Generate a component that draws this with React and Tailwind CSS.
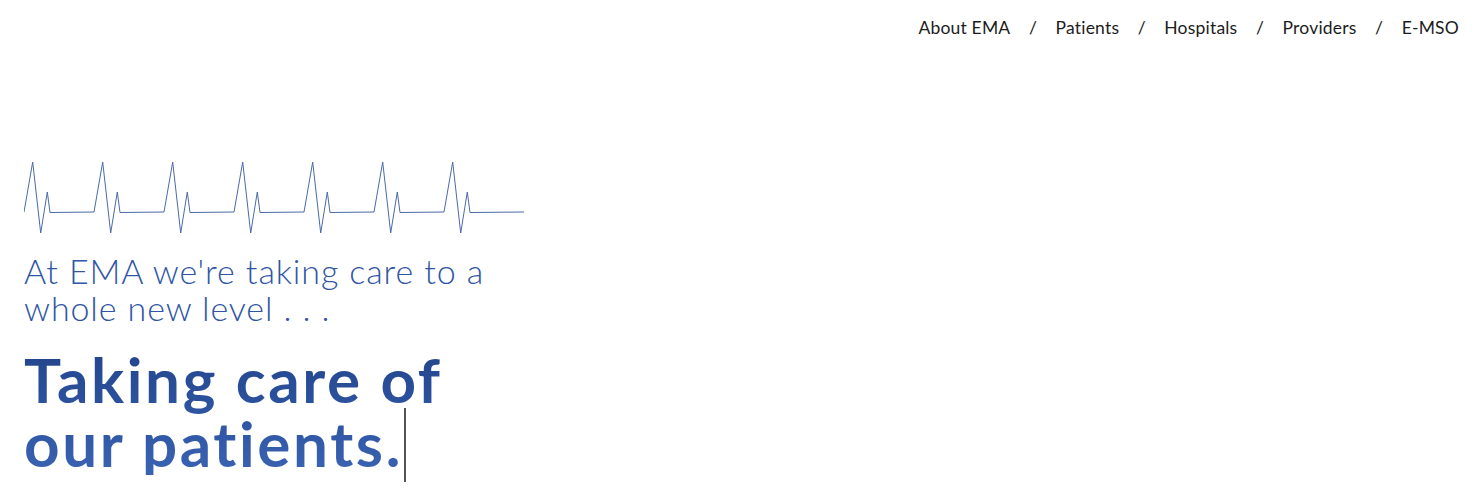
import React from "react";

const NAV = ["About EMA", "Patients", "Hospitals", "Providers", "E-MSO"];

// one heartbeat every 70px
function ecgPoints() {
  const pts = [];
  for (let k = 0; k < 7; k++) {
    const s = 70 * k;
    pts.push(`${s},54`, `${s + 8.7},4`, `${s + 16.7},75`, `${s + 23.3},34`, `${s + 26},54.5`);
  }
  pts.push("500,54");
  return pts.join(" ");
}

export default function App() {
  return (
    <div className="w-[1484px] h-[492px] bg-white overflow-hidden font-['Lato',sans-serif]">
      <nav className="flex justify-end items-center pt-[15px] pr-[25px] text-[17.5px] tracking-[0.2px] text-[#1c1c1c]">
        {NAV.map((item, i) => (
          <React.Fragment key={item}>
            {i > 0 && <span className="px-[18.5px]">/</span>}
            <a href="#" className="leading-6">{item}</a>
          </React.Fragment>
        ))}
      </nav>

      <section className="pl-6 pt-[117px]">
        <svg width="500" height="80" viewBox="0 0 500 80" className="block">
          <polyline points={ecgPoints()} fill="none" stroke="#4a6aa8" strokeWidth="1" />
        </svg>

        <p className="mt-[14px] text-[34px] leading-[37px] font-light tracking-[0.9px] text-[#2f55a4] w-[520px]">
          At EMA we're taking care to a
          <br />
          whole new level . . .
        </p>

        <h1 className="mt-[21px] text-[62px] leading-[64px] font-bold tracking-[2.6px] bg-gradient-to-b from-[#22448c] to-[#3a63b3] bg-clip-text text-transparent">
          Taking care of
          <br />
          our patients.<span className="inline-block w-[2px] h-[74px] -mt-[20px] -mb-[10px] bg-[#555] ml-[1px] align-[-5px]" />
        </h1>
      </section>
    </div>
  );
}
